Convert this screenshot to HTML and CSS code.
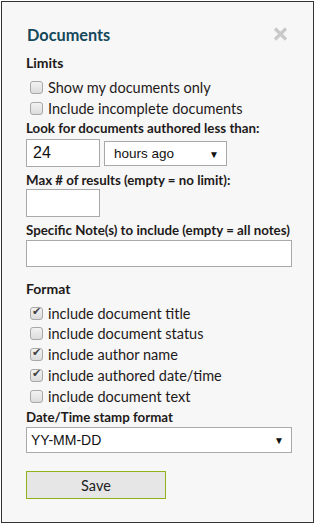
FILE: index.html
```html
<!DOCTYPE html>
<html lang="en">
<head>
  <meta charset="UTF-8" />
  <title>Documents</title>
  <link rel="stylesheet" href="styles.css">
</head>
<body>
  <div class="panel">
    <div class="panel-head">
      <h2>Documents</h2>
      <svg class="close" width="15" height="14" viewBox="0 0 15 14">
        <path d="M2 1.5 L13 12.5 M13 1.5 L2 12.5" stroke="#c9c9c9" stroke-width="3.2" fill="none"/>
      </svg>
    </div>

    <h3>Limits</h3>
    <label class="check"><span class="box"></span>Show my documents only</label>
    <label class="check"><span class="box"></span>Include incomplete documents</label>

    <div class="field-label first">Look for documents authored less than:</div>
    <div class="row">
      <input class="text small" type="text" value="24">
      <div class="select-wrap mid">
        <select class="select">
          <option>hours ago</option>
          <option>days ago</option>
        </select>
      </div>
    </div>

    <div class="field-label">Max # of results (empty = no limit):</div>
    <input class="text small" type="text">

    <div class="field-label">Specific Note(s) to include (empty = all notes)</div>
    <input class="text wide" type="text">

    <h3 class="format">Format</h3>
    <label class="check"><span class="box on"></span>include document title</label>
    <label class="check"><span class="box"></span>include document status</label>
    <label class="check"><span class="box on"></span>include author name</label>
    <label class="check"><span class="box on"></span>include authored date/time</label>
    <label class="check"><span class="box"></span>include document text</label>

    <div class="field-label date">Date/Time stamp format</div>
    <div class="select-wrap wide">
      <select class="select">
        <option>YY-MM-DD</option>
        <option>DD-MM-YY</option>
      </select>
    </div>

    <button class="save" type="button">Save</button>
  </div>
</body>
</html>
```

FILE: styles.css
```css
body {
  margin: 1px;
  font-family: Lato, "Liberation Sans", sans-serif;
  color: #1e1a1a;
  background: #fff;
}

.panel {
  box-sizing: border-box;
  width: 313px;
  height: 522px;
  border: 1px solid #333;
  background-color: #f7f7f7;
  padding: 0 0 0 24px;
}

.panel-head {
  display: flex;
  justify-content: space-between;
  align-items: center;
  padding: 20px 25px 0 1px;
  height: 24px;
}

.panel-head h2 {
  margin: 0;
  font-size: 16.3px;
  font-weight: bold;
  color: #14485a;
}

.close {
  display: block;
  margin-top: -1px;
}

h3 {
  margin: 8px 0 5.6px 0;
  font-size: 14px;
  font-weight: bold;
  line-height: 18px;
}

h3.format {
  margin-top: 13px;
  margin-bottom: 4.6px;
}

.check {
  display: flex;
  align-items: center;
  height: 20.75px;
  font-size: 14.5px;
  padding-left: 4px;
}

.box {
  width: 11px;
  height: 11px;
  border: 1px solid #a8a8a8;
  border-radius: 3px;
  background: linear-gradient(#f2f2f2, #dcdcdc);
  margin-right: 5px;
  position: relative;
  flex: none;
}

.box.on::after {
  content: "\2714";
  position: absolute;
  left: 1px;
  top: -3px;
  font-size: 11px;
  color: #444;
  font-family: "DejaVu Sans", sans-serif;
}

.field-label {
  font-size: 13.3px;
  font-weight: bold;
  line-height: 16px;
  margin-top: 5px;
}

.field-label.first {
  margin-top: 1px;
}

.field-label.date {
  margin-top: 2.6px;
}

.row {
  display: flex;
  align-items: center;
  gap: 4px;
  margin-top: 3px;
}

.text {
  display: block;
  box-sizing: border-box;
  height: 28px;
  border: 1px solid #a9a9a9;
  background: #fff;
  font-family: "Liberation Sans", Arial, sans-serif;
  font-size: 16px;
  padding: 0 6px;
  color: #111;
  margin: 1px 0 0 0;
}

.row .text {
  margin: 0;
}

.text.small {
  width: 74px;
}

.text.wide {
  width: 266px;
  height: 27px;
  margin-top: 2px;
}

.select-wrap {
  position: relative;
  box-sizing: border-box;
  border: 1px solid #a9a9a9;
  background: #fff;
  height: 26px;
}

.select-wrap.mid {
  width: 123px;
  height: 25px;
}

.select-wrap.wide {
  width: 266px;
  margin-top: 2px;
}

.select-wrap::after {
  content: "\25BC";
  position: absolute;
  right: 7px;
  top: 6px;
  font-size: 10px;
  color: #111;
  pointer-events: none;
}

.select {
  appearance: none;
  -webkit-appearance: none;
  border: none;
  background: transparent;
  width: 100%;
  height: 100%;
  font-family: "Liberation Sans", Arial, sans-serif;
  font-size: 13.5px;
  color: #111;
  padding: 0 0 0 9px;
  outline: none;
}

.select-wrap.wide .select {
  padding-left: 4px;
  font-size: 14px;
}

.save {
  display: block;
  margin-top: 18px;
  width: 140px;
  height: 28px;
  background: #e6e6e6;
  border: 1px solid #8fb21a;
  font-family: Lato, sans-serif;
  font-size: 14.5px;
  color: #222;
}
```
